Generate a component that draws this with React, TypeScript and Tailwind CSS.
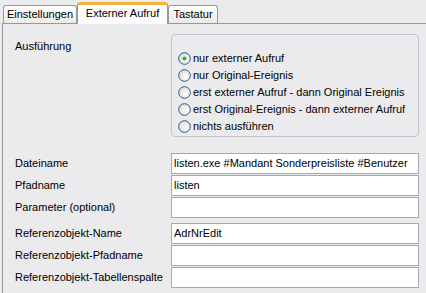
const options = [
  "nur externer Aufruf",
  "nur Original-Ereignis",
  "erst externer Aufruf - dann Original Ereignis",
  "erst Original-Ereignis - dann externer Aufruf",
  "nichts ausführen",
]

const fields1 = [
  { label: "Dateiname", value: "listen.exe #Mandant Sonderpreisliste #Benutzer" },
  { label: "Pfadname", value: "listen" },
  { label: "Parameter (optional)", value: "" },
]

const fields2 = [
  { label: "Referenzobjekt-Name", value: "AdrNrEdit" },
  { label: "Referenzobjekt-Pfadname", value: "" },
  { label: "Referenzobjekt-Tabellenspalte", value: "" },
]

const Radio = ({ checked }: { checked?: boolean }) => (
  <svg width="13" height="13" viewBox="0 0 13 13" className="shrink-0">
    <defs>
      <radialGradient id="rg" cx="0.65" cy="0.65" r="0.7">
        <stop offset="0" stopColor="#ffffff" />
        <stop offset="1" stopColor="#dcdcd6" />
      </radialGradient>
    </defs>
    <circle cx="6.5" cy="6.5" r="5.8" fill="url(#rg)" stroke="#2c5a86" strokeWidth="1" />
    {checked && <circle cx="6.5" cy="6.5" r="2" fill="#2db82d" />}
  </svg>
)

const Field = ({ label, value }: { label: string; value: string }) => (
  <div className="flex h-[22px] items-center">
    <div className="w-[168px] whitespace-nowrap pl-[12px]">{label}</div>
    <div className="flex h-[21px] w-[248px] items-center whitespace-nowrap border border-[#a3a9b1] bg-white pl-[2px]">
      {value}
    </div>
  </div>
)

const App = () => {
  return (
    <div
      className="h-[293px] w-[426px] overflow-hidden bg-[#ebebee] text-[11px] text-black"
      style={{ fontFamily: '"Liberation Sans", Arial, sans-serif' }}
    >
      <div className="flex h-[23px] items-end pl-[3px]">
        <div className="flex h-[18px] w-[74px] items-center justify-center rounded-t-[3px] border border-b-0 border-[#919b9c] bg-gradient-to-b from-white to-[#ecebe6]">
          Einstellungen
        </div>
        <div className="relative -mb-px flex h-[22px] w-[91px] items-center justify-center rounded-t-[3px] border-x border-t-[3px] border-x-[#919b9c] border-t-[#f4b43c] bg-[#fcfcfe] pb-[2px]">
          Externer Aufruf
        </div>
        <div className="flex h-[18px] w-[50px] items-center justify-center rounded-t-[3px] border border-b-0 border-[#919b9c] bg-gradient-to-b from-white to-[#ecebe6]">
          Tastatur
        </div>
      </div>
      <div className="ml-[2px] h-[270px] border-l border-t border-[#919b9c] pt-[10px]">
        <div className="flex">
          <div className="w-[168px] pl-[12px] pt-[4px]">Ausführung</div>
          <div className="flex h-[103px] w-[248px] flex-col rounded-[4px] border border-[#c5c3cc] pl-[6px] pt-[15px]">
            {options.map((o, i) => (
              <div key={o} className="flex h-[17px] items-center gap-[2px]">
                <Radio checked={i === 0} />
                <span>{o}</span>
              </div>
            ))}
          </div>
        </div>
        <div className="mt-[15px] flex flex-col">
          {fields1.map((f) => (
            <Field key={f.label} {...f} />
          ))}
        </div>
        <div className="mt-[4px] flex flex-col">
          {fields2.map((f) => (
            <Field key={f.label} {...f} />
          ))}
        </div>
      </div>
    </div>
  )
}

export default App
